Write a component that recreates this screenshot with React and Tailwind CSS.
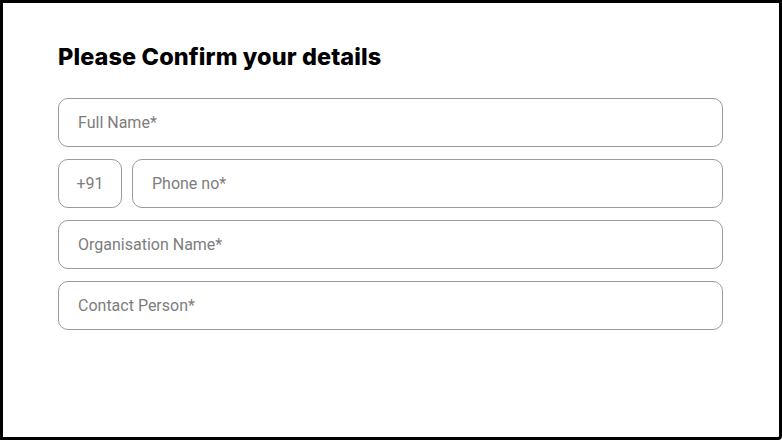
import React from 'react'

const Field = ({ placeholder, className = '' }) => (
  <input
    type="text"
    placeholder={placeholder}
    className={`h-[49px] rounded-[10px] border border-[#9a9a9a] bg-white px-[19px] text-[16px] text-[#222] placeholder:text-[#7d7d7d] outline-none ${className}`}
    style={{ fontFamily: 'Roboto, sans-serif' }}
  />
)

const App = () => {
  return (
    <div className="w-[782px] h-[440px] bg-white">
      <div className="w-full h-full border-[3px] border-black rounded-br-[4px] pl-[55px] pr-[56px] pt-[40px]">
        {/* Header */}
        <h1
          className="text-[23.5px] font-extrabold text-black leading-[28px] tracking-[0.1px]"
          style={{ fontFamily: 'Inter, sans-serif' }}
        >
          Please Confirm your details
        </h1>

        {/* Form */}
        <div className="mt-[27px] flex flex-col gap-[12px]">
          <Field placeholder="Full Name*" className="w-full" />
          <div className="flex gap-[10px]">
            <div
              className="h-[49px] w-[64px] shrink-0 rounded-[10px] border border-[#9a9a9a] flex items-center justify-center text-[16px] text-[#7d7d7d]"
              style={{ fontFamily: 'Roboto, sans-serif' }}
            >
              +91
            </div>
            <Field placeholder="Phone no*" className="flex-1 min-w-0" />
          </div>
          <Field placeholder="Organisation Name*" className="w-full" />
          <Field placeholder="Contact Person*" className="w-full" />
        </div>
      </div>
    </div>
  )
}

export default App
